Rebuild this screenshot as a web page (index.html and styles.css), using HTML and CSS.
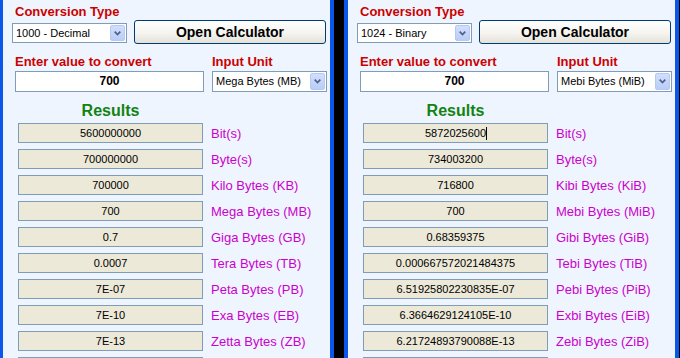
FILE: index.html
```html
<!DOCTYPE html>
<html lang="en">
<head>
  <meta charset="UTF-8">
  <title>Data Size Converter</title>
  <link rel="stylesheet" href="styles.css">
</head>
<body>
  <div class="screen">

    <div class="panel">
      <div class="caption">Conversion Type</div>
      <div class="type-row">
        <div class="combo type-combo">
          <span class="combo-text">1000 - Decimal</span>
          <span class="combo-arrow"><svg width="7" height="5" viewBox="0 0 7 5"><path d="M0.7 0.7 L3.5 3.6 L6.3 0.7" /></svg></span>
        </div>
        <button class="btn">Open Calculator</button>
      </div>

      <div class="entry-grid">
        <div class="caption">Enter value to convert</div>
        <div class="caption">Input Unit</div>
        <div class="entry">700</div>
        <div class="combo">
          <span class="combo-text">Mega Bytes (MB)</span>
          <span class="combo-arrow"><svg width="7" height="5" viewBox="0 0 7 5"><path d="M0.7 0.7 L3.5 3.6 L6.3 0.7" /></svg></span>
        </div>
      </div>

      <div class="heading">Results</div>
      <div class="results">
        <div class="result"><div class="result-value">5600000000</div><span class="result-unit">Bit(s)</span></div>
        <div class="result"><div class="result-value">700000000</div><span class="result-unit">Byte(s)</span></div>
        <div class="result"><div class="result-value">700000</div><span class="result-unit">Kilo Bytes (KB)</span></div>
        <div class="result"><div class="result-value">700</div><span class="result-unit">Mega Bytes (MB)</span></div>
        <div class="result"><div class="result-value">0.7</div><span class="result-unit">Giga Bytes (GB)</span></div>
        <div class="result"><div class="result-value">0.0007</div><span class="result-unit">Tera Bytes (TB)</span></div>
        <div class="result"><div class="result-value">7E-07</div><span class="result-unit">Peta Bytes (PB)</span></div>
        <div class="result"><div class="result-value">7E-10</div><span class="result-unit">Exa Bytes (EB)</span></div>
        <div class="result"><div class="result-value">7E-13</div><span class="result-unit">Zetta Bytes (ZB)</span></div>
        <div class="result"><div class="result-value">7E-16</div><span class="result-unit">Yotta Bytes (YB)</span></div>
      </div>
    </div>

    <div class="panel">
      <div class="caption">Conversion Type</div>
      <div class="type-row">
        <div class="combo type-combo">
          <span class="combo-text">1024 - Binary</span>
          <span class="combo-arrow"><svg width="7" height="5" viewBox="0 0 7 5"><path d="M0.7 0.7 L3.5 3.6 L6.3 0.7" /></svg></span>
        </div>
        <button class="btn">Open Calculator</button>
      </div>

      <div class="entry-grid">
        <div class="caption">Enter value to convert</div>
        <div class="caption">Input Unit</div>
        <div class="entry">700</div>
        <div class="combo">
          <span class="combo-text">Mebi Bytes (MiB)</span>
          <span class="combo-arrow"><svg width="7" height="5" viewBox="0 0 7 5"><path d="M0.7 0.7 L3.5 3.6 L6.3 0.7" /></svg></span>
        </div>
      </div>

      <div class="heading">Results</div>
      <div class="results">
        <div class="result"><div class="result-value">5872025600<span class="caret"></span></div><span class="result-unit">Bit(s)</span></div>
        <div class="result"><div class="result-value">734003200</div><span class="result-unit">Byte(s)</span></div>
        <div class="result"><div class="result-value">716800</div><span class="result-unit">Kibi Bytes (KiB)</span></div>
        <div class="result"><div class="result-value">700</div><span class="result-unit">Mebi Bytes (MiB)</span></div>
        <div class="result"><div class="result-value">0.68359375</div><span class="result-unit">Gibi Bytes (GiB)</span></div>
        <div class="result"><div class="result-value">0.000667572021484375</div><span class="result-unit">Tebi Bytes (TiB)</span></div>
        <div class="result"><div class="result-value">6.51925802230835E-07</div><span class="result-unit">Pebi Bytes (PiB)</span></div>
        <div class="result"><div class="result-value">6.3664629124105E-10</div><span class="result-unit">Exbi Bytes (EiB)</span></div>
        <div class="result"><div class="result-value">6.21724893790088E-13</div><span class="result-unit">Zebi Bytes (ZiB)</span></div>
        <div class="result"><div class="result-value">6.07153216591883E-16</div><span class="result-unit">Yobi Bytes (YiB)</span></div>
      </div>
    </div>

  </div>
</body>
</html>
```

FILE: styles.css
```css
* {
  box-sizing: border-box;
}

body {
  margin: 0;
  height: 358px;
  overflow: hidden;
  background: #000;
  font-family: "Liberation Sans", Arial, sans-serif;
  color: #000;
}

.screen {
  display: flex;
  gap: 10px;
  margin-left: -1px;
}

.panel {
  width: 335px;
  height: 420px;
  flex-shrink: 0;
  background: #eef5fe;
  border-left: 4px solid #0b57ea;
  border-right: 4px solid #0b57ea;
  padding: 4px 0 0 9px;
}

.caption {
  color: #cc0000;
  font-weight: bold;
  font-size: 13px;
  line-height: 15px;
  margin-left: 3px;
  white-space: nowrap;
}

.type-row {
  display: flex;
  gap: 7px;
  height: 24px;
  margin-top: 1px;
}

/* xp style combo box */
.combo {
  display: flex;
  width: 115px;
  height: 21px;
  border: 1px solid #7f9db9;
  background: #fff;
}

.type-combo {
  height: 20px;
  margin-top: 3px;
}

.combo-text {
  flex: 1;
  padding-left: 3px;
  font-size: 11px;
  line-height: 18px;
  white-space: nowrap;
  overflow: hidden;
}

.combo-arrow {
  width: 15px;
  margin: 1px;
  display: flex;
  align-items: center;
  justify-content: center;
  border: 1px solid #b7c9f3;
  border-radius: 2px;
  background: linear-gradient(#d2defc, #b9cdf8);
}

.combo-arrow svg path {
  fill: none;
  stroke: #4d6185;
  stroke-width: 1.7;
}

.btn {
  width: 192px;
  height: 24px;
  padding: 0;
  border: 1px solid #003c74;
  border-radius: 3px;
  background: linear-gradient(#ffffff, #f5f4ef 55%, #e4e1d7);
  font-family: inherit;
  font-weight: bold;
  font-size: 14px;
  color: #000;
}

.entry-grid {
  display: grid;
  grid-template-columns: 189px 115px;
  grid-template-rows: 15px 21px;
  column-gap: 8px;
  row-gap: 2px;
  margin: 10px 0 0 3px;
}

.entry-grid .caption {
  margin-left: 0;
}

.entry {
  border: 1px solid #7f9db9;
  background: #fff;
  text-align: center;
  font-weight: bold;
  font-size: 12px;
  line-height: 19px;
}

.heading {
  width: 185px;
  margin: 9px 0 0 6px;
  text-align: center;
  color: #128312;
  font-weight: bold;
  font-size: 16px;
  line-height: 19px;
}

.results {
  display: flex;
  flex-direction: column;
  gap: 6px;
  margin: 3px 0 0 6px;
}

.result {
  display: flex;
  align-items: center;
  gap: 8px;
}

.result-value {
  width: 185px;
  height: 20px;
  border: 1px solid #7f9db9;
  background: #ece9d8;
  text-align: center;
  font-size: 11px;
  line-height: 18px;
  white-space: nowrap;
}

.caret {
  display: inline-block;
  width: 1px;
  height: 13px;
  margin-right: -1px;
  vertical-align: -3px;
  background: #000;
}

.result-unit {
  color: #cc00cc;
  font-size: 13px;
  white-space: nowrap;
}
```
